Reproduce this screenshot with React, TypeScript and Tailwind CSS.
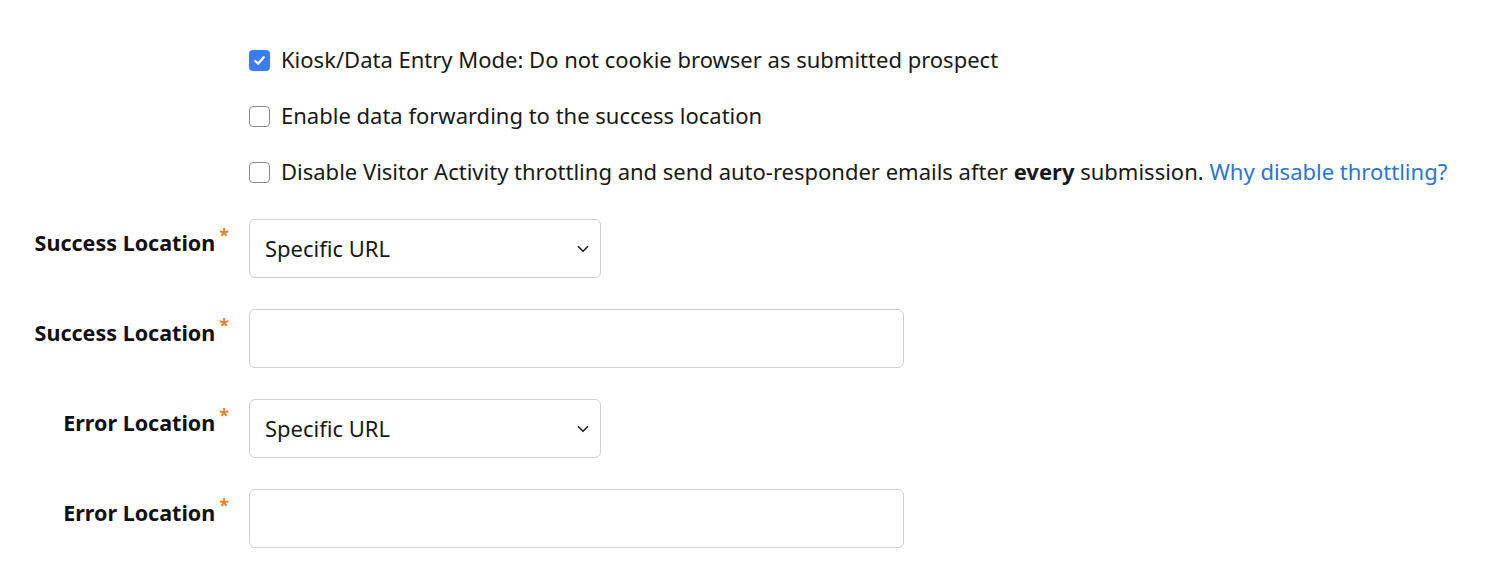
import { ChevronDown } from "lucide-react";

const FONT = { fontFamily: '"Noto Sans", "Open Sans", sans-serif' };

const CheckRow = ({ checked, children }: { checked?: boolean; children: React.ReactNode }) => (
  <div className="flex h-[56px] items-center">
    {checked ? (
      <span className="flex h-[21px] w-[21px] items-center justify-center rounded-[4px] bg-[#3b7cf0]">
        <svg viewBox="0 0 16 16" className="h-[15px] w-[15px]" fill="none">
          <path d="M3.5 8.5l3 3 6-7" stroke="white" strokeWidth={2.4} strokeLinecap="round" strokeLinejoin="round" />
        </svg>
      </span>
    ) : (
      <span className="h-[21px] w-[21px] rounded-[4px] border-[1.5px] border-[#8a8a8a] bg-white" />
    )}
    <span className="ml-[11px] -mt-[2px] text-[22px] text-[#181818]">{children}</span>
  </div>
);

const Field = ({ label, kind }: { label: string; kind: "select" | "input" }) => (
  <div className="flex h-[58px] items-start">
    <div className="flex w-[249px] justify-end pr-[20px] pt-[9px]">
      <span className="text-[21.5px] font-bold leading-[30px] text-[#111]">{label}</span>
      <span className="ml-[4px] -mt-[7px] text-[18px] font-bold leading-[28px] text-[#e0862f]">*</span>
    </div>
    {kind === "select" ? (
      <div className="flex h-[59px] w-[352px] items-center justify-between rounded-[6px] border border-[#cfcfcf] bg-white pl-[15px] pr-[8px]">
        <span className="text-[22px] text-[#181818]">Specific URL</span>
        <ChevronDown className="h-[18px] w-[18px] text-[#222]" strokeWidth={2.2} />
      </div>
    ) : (
      <div className="h-[59px] w-[655px] rounded-[6px] border border-[#cfcfcf] bg-white" />
    )}
  </div>
);

export default function App() {
  return (
    <div className="min-h-screen bg-white" style={FONT}>
      <div className="pt-[32px]">
        <div className="pl-[249px]">
          <CheckRow checked>Kiosk/Data Entry Mode: Do not cookie browser as submitted prospect</CheckRow>
          <CheckRow>Enable data forwarding to the success location</CheckRow>
          <CheckRow>
            Disable Visitor Activity throttling and send auto-responder emails after <b className="font-bold">every</b> submission.{" "}
            <a className="text-[#2b74d6]">Why disable throttling?</a>
          </CheckRow>
        </div>
        <div className="mt-[19px] flex flex-col gap-[32px]">
          <Field label="Success Location" kind="select" />
          <Field label="Success Location" kind="input" />
          <Field label="Error Location" kind="select" />
          <Field label="Error Location" kind="input" />
        </div>
      </div>
    </div>
  );
}
